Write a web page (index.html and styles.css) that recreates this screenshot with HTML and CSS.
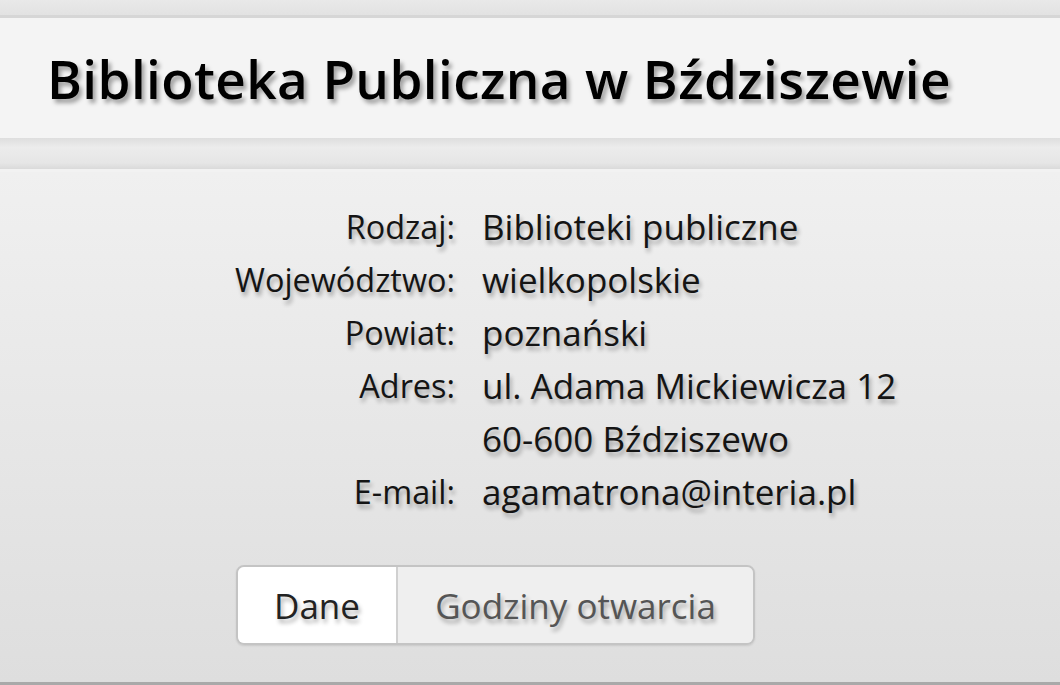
FILE: index.html
```html
<!DOCTYPE html>
<html lang="pl">
<head>
  <meta charset="UTF-8">
  <title>Biblioteka Publiczna w Bździszewie</title>
  <link rel="stylesheet" href="styles.css">
</head>
<body>
  <div class="top-strip"></div>
  <div class="title-bar">
    <h1>Biblioteka Publiczna w Bździszewie</h1>
  </div>
  <div class="band"></div>
  <div class="content">
    <div class="details">
      <div class="label">Rodzaj:</div>
      <div class="value">Biblioteki publiczne</div>
      <div class="label">Województwo:</div>
      <div class="value">wielkopolskie</div>
      <div class="label">Powiat:</div>
      <div class="value">poznański</div>
      <div class="label">Adres:</div>
      <div class="value">ul. Adama Mickiewicza 12<br>60-600 Bździszewo</div>
      <div class="label">E-mail:</div>
      <div class="value">agamatrona@interia.pl</div>
    </div>
    <div class="tabs">
      <div class="tab active">Dane</div>
      <div class="tab">Godziny otwarcia</div>
    </div>
  </div>
</body>
</html>
```

FILE: styles.css
```css
body {
  margin: 0;
  width: 1060px;
  height: 685px;
  overflow: hidden;
  font-family: 'Open Sans', sans-serif;
  background: #dcdcdc;
  display: flex;
  flex-direction: column;
}

.top-strip {
  height: 15px;
  background: linear-gradient(#e9e9e9, #e2e2e2);
  border-bottom: 3px solid #d6d6d6;
}

.title-bar {
  height: 120px;
  background: #f4f4f4;
  display: flex;
  align-items: center;
  padding-left: 48px;
}

.title-bar h1 {
  margin: 0 0 0 -1px;
  font-size: 53px;
  font-weight: 600;
  color: #000;
  text-shadow: 3px 4px 4px rgba(0, 0, 0, 0.35);
  letter-spacing: 0.4px;
}

.band {
  height: 31px;
  background: linear-gradient(#dedede, #ececec 30%, #e6e6e6 80%, #dadada);
  border-bottom: 3px solid #f2f2f2;
}

.content {
  flex: 1;
  background: linear-gradient(#f0f0f0, #dedede);
  border-bottom: 3px solid #a9a9a9;
  display: flex;
  flex-direction: column;
  padding-left: 233px;
}

.details {
  display: grid;
  grid-template-columns: 222px auto;
  column-gap: 27px;
  margin-top: 28px;
  line-height: 53px;
  color: #141414;
  text-shadow: 2px 4px 4px rgba(0, 0, 0, 0.3);
}

.label {
  text-align: right;
  font-size: 32.4px;
}

.value {
  font-size: 35px;
}

.tabs {
  display: flex;
  align-self: flex-start;
  margin: 47px 0 0 3px;
  border: 2px solid #c4c4c4;
  border-radius: 8px;
  overflow: hidden;
  box-shadow: 0 1px 2px rgba(0, 0, 0, 0.1);
  font-size: 35px;
  height: 76px;
}

.tab {
  display: flex;
  align-items: center;
  justify-content: center;
  background: #efefef;
  color: #555;
  width: 355px;
  text-shadow: 2px 4px 4px rgba(0, 0, 0, 0.3);
}

.tab.active {
  width: 158px;
  background: #fff;
  color: #222;
  border-right: 2px solid #d0d0d0;
}
```
